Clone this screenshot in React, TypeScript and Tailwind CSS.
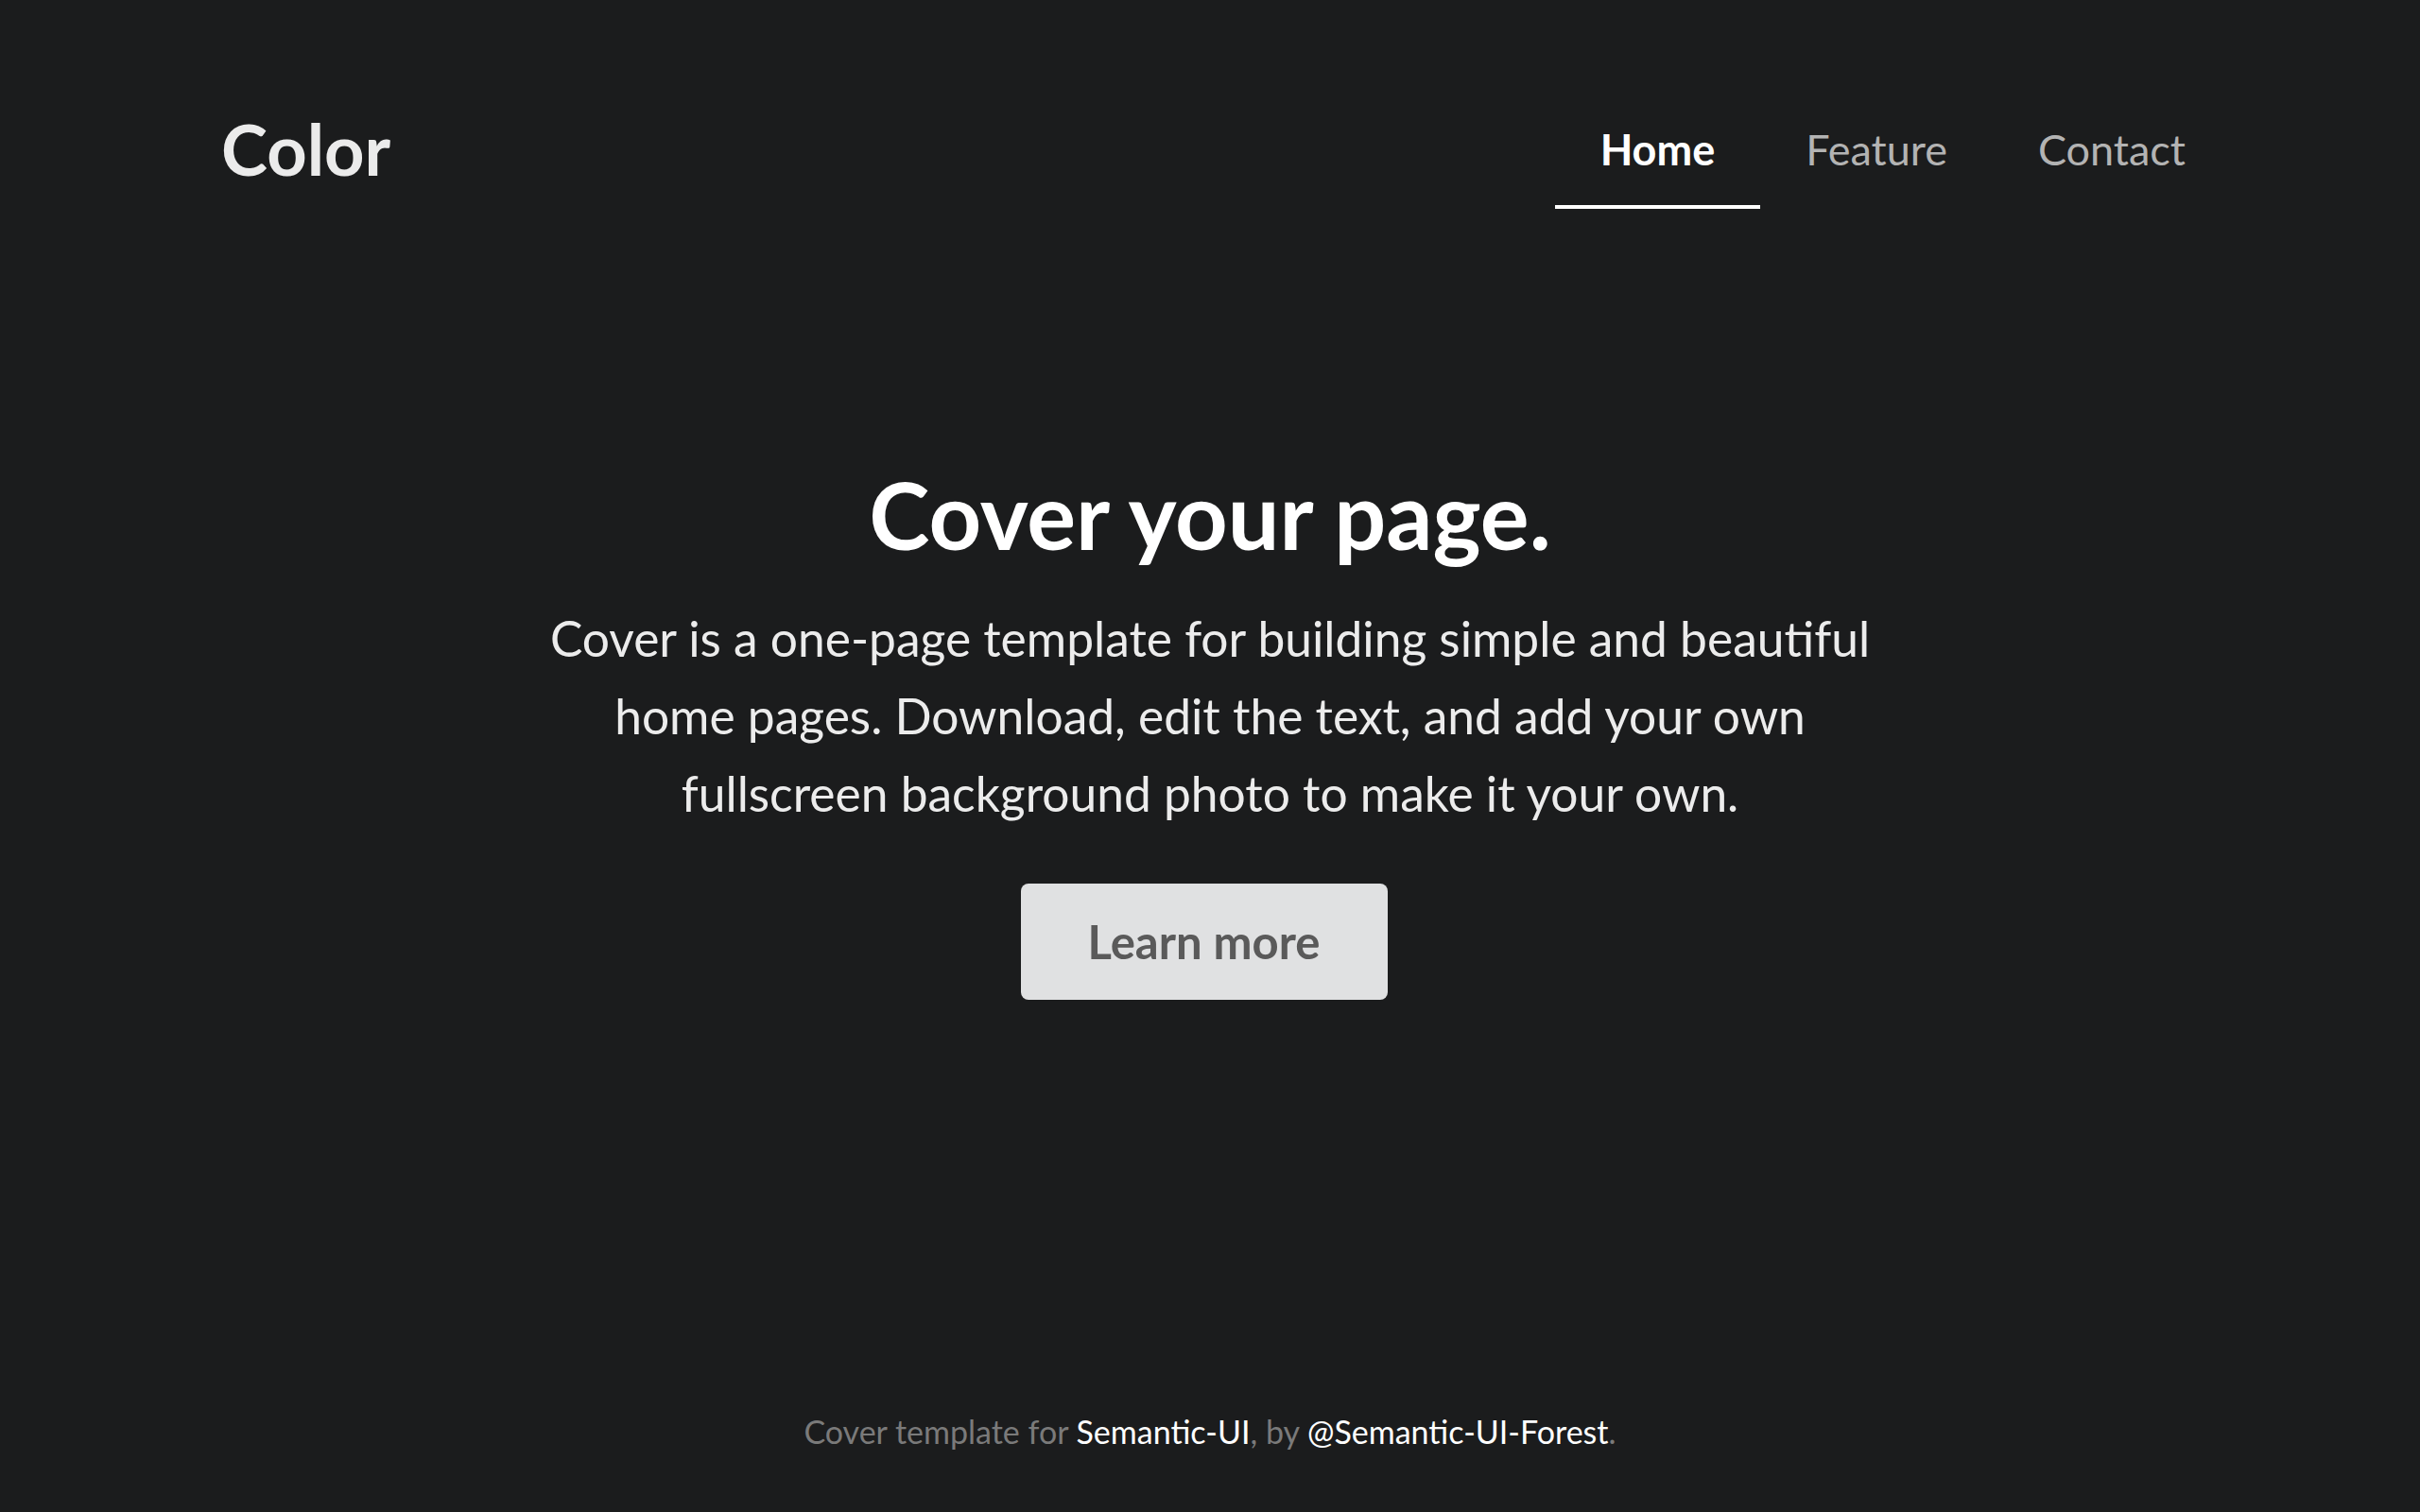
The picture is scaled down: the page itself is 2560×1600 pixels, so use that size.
export default function App() {
  const links = [
    { label: "Home", active: true },
    { label: "Feature", active: false },
    { label: "Contact", active: false },
  ];

  return (
    <div
      className="min-h-screen flex flex-col bg-[#1b1c1d] text-white"
      style={{ fontFamily: "Lato, 'Open Sans', sans-serif" }}
    >
      <header className="flex justify-between items-start pl-[234px] pr-[200px] pt-[121px]">
        <div className="text-[74px] leading-none font-bold text-[#ebebeb]">Color</div>
        <nav className="flex mt-[15px]">
          {links.map((l) => (
            <a
              key={l.label}
              href="#"
              className={`px-[48px] pb-[36px] text-[45px] leading-none border-b-4 ${
                l.active ? "border-white font-bold text-white" : "border-transparent text-[#b3b3b3]"
              }`}
            >
              {l.label}
            </a>
          ))}
        </nav>
      </header>

      <main className="flex-1 flex flex-col items-center text-center">
        <h1 className="mt-[275px] text-[97px] leading-none font-bold text-white">Cover your page.</h1>
        <p className="mt-[41px] max-w-[1430px] text-[51.5px] leading-[82px] text-[#ececec]">
          Cover is a one-page template for building simple and beautiful home pages. Download, edit the
          text, and add your own fullscreen background photo to make it your own.
        </p>
        <button className="mt-[55px] mr-[13px] w-[388px] h-[123px] rounded-[8px] bg-[#e0e1e2] text-[49px] leading-none font-bold text-[#5a5a5a]">
          Learn more
        </button>
      </main>

      <footer className="pb-[68px] text-center text-[34px] leading-none text-[#7a7a7a]">
        Cover template for <a href="#" className="text-white">Semantic-UI</a>, by{" "}
        <a href="#" className="text-white">@Semantic-UI-Forest</a>.
      </footer>
    </div>
  );
}
